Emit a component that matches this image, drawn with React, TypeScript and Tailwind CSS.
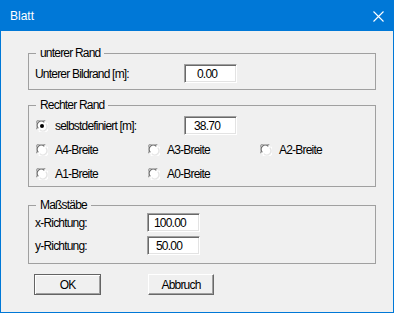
const narrow = "font-['Liberation_Sans',Arial,sans-serif] tracking-[-0.8px]";

function Radio({ checked }: { checked?: boolean }) {
  return (
    <svg width="12" height="12" viewBox="0 0 12 12" className="shrink-0">
      <circle cx="6" cy="6" r="5.5" fill="#ffffff" />
      <path d="M1.1 9.2 A5.4 5.4 0 0 1 9.2 1.1" fill="none" stroke="#a0a0a0" strokeWidth="1.2" />
      <path d="M2.3 8.3 A4.2 4.2 0 0 1 8.3 2.3" fill="none" stroke="#696969" strokeWidth="1.2" />
      <path d="M10.9 2.8 A5.4 5.4 0 0 1 2.8 10.9" fill="none" stroke="#ffffff" strokeWidth="1.2" />
      <path d="M9.7 3.7 A4.2 4.2 0 0 1 3.7 9.7" fill="none" stroke="#e3e3e3" strokeWidth="1.2" />
      {checked && <circle cx="6" cy="6" r="2" fill="#000000" />}
    </svg>
  );
}

function Field({ value, pad, width }: { value: string; pad: string; width: string }) {
  return (
    <div
      className={`h-[19px] ${width} ${pad} flex items-center bg-white border border-t-[#a0a0a0] border-l-[#a0a0a0] border-r-white border-b-white shadow-[inset_1px_1px_0_#696969,inset_-1px_-1px_0_#e3e3e3] text-[12px] text-black`}
    >
      {value}
    </div>
  );
}

function RadioItem({ label, checked, width }: { label: string; checked?: boolean; width: string }) {
  return (
    <div className={`flex items-center ${width}`}>
      <div className="w-[19px]">
        <Radio checked={checked} />
      </div>
      <span>{label}</span>
    </div>
  );
}

export default function App() {
  return (
    <div className={`w-[394px] h-[313px] bg-[#f0f0f0] flex flex-col border border-[#0078d7] ${narrow} text-[12px] text-black`}>
      <div className="h-[30px] shrink-0 bg-[#0078d7] flex items-center justify-between pl-[9px] pr-[9px] tracking-normal">
        <span className="font-['Liberation_Sans',Arial,sans-serif] text-[12px] text-white">Blatt</span>
        <svg width="11" height="11" viewBox="0 0 11 11">
          <path d="M0.5 0.5 L10.5 10.5 M10.5 0.5 L0.5 10.5" stroke="#ffffff" strokeWidth="1.1" />
        </svg>
      </div>

      <div className="flex flex-col pl-[27px]">
        <fieldset className="mt-[15px] w-[348px] border border-[#a0a0a0] pl-[6px] pt-[4px] pb-[6px]">
          <legend className="ml-[1px] px-[4px] leading-[14px]">unterer Rand</legend>
          <div className="flex items-center">
            <span className="w-[149px]">Unterer Bildrand [m]:</span>
            <Field value="0.00" pad="pl-[12px]" width="w-[53px]" />
          </div>
        </fieldset>

        <fieldset className="mt-[8px] w-[348px] border border-[#a0a0a0] pl-[7px] pt-[4px] pb-[3px]">
          <legend className="ml-[0px] px-[4px] leading-[14px]">Rechter Rand</legend>
          <div className="flex flex-col gap-[5px]">
            <div className="flex items-center h-[19px]">
              <RadioItem label="selbstdefiniert [m]:" checked width="w-[148px]" />
              <Field value="38.70" pad="pl-[9px]" width="w-[53px]" />
            </div>
            <div className="flex items-center h-[19px]">
              <RadioItem label="A4-Breite" width="w-[112px]" />
              <RadioItem label="A3-Breite" width="w-[112px]" />
              <RadioItem label="A2-Breite" width="w-[100px]" />
            </div>
            <div className="flex items-center h-[19px]">
              <RadioItem label="A1-Breite" width="w-[112px]" />
              <RadioItem label="A0-Breite" width="w-[112px]" />
            </div>
          </div>
        </fieldset>

        <fieldset className="mt-[11px] w-[348px] border border-[#a0a0a0] pl-[6px] pt-[1px] pb-[8px]">
          <legend className="ml-[1px] px-[4px] leading-[14px]">Maßstäbe</legend>
          <div className="flex flex-col gap-[4px]">
            <div className="flex items-center">
              <span className="w-[112px]">x-Richtung:</span>
              <Field value="100.00" pad="pl-[6px]" width="w-[53px]" />
            </div>
            <div className="flex items-center">
              <span className="w-[112px]">y-Richtung:</span>
              <Field value="50.00" pad="pl-[8px]" width="w-[53px]" />
            </div>
          </div>
        </fieldset>

        <div className="mt-[10px] pl-[6px] flex gap-[47px]">
          <button className="w-[67px] h-[21px] bg-[#f0f0f0] border border-[#646464] shadow-[inset_1px_1px_0_#ffffff,inset_-1px_-1px_0_#a0a0a0] text-[12px] leading-none">
            OK
          </button>
          <button className="w-[66px] h-[21px] bg-[#f0f0f0] border border-t-white border-l-white border-r-[#696969] border-b-[#696969] shadow-[inset_-1px_-1px_0_#a0a0a0] text-[12px] leading-none">
            Abbruch
          </button>
        </div>
      </div>
    </div>
  );
}
